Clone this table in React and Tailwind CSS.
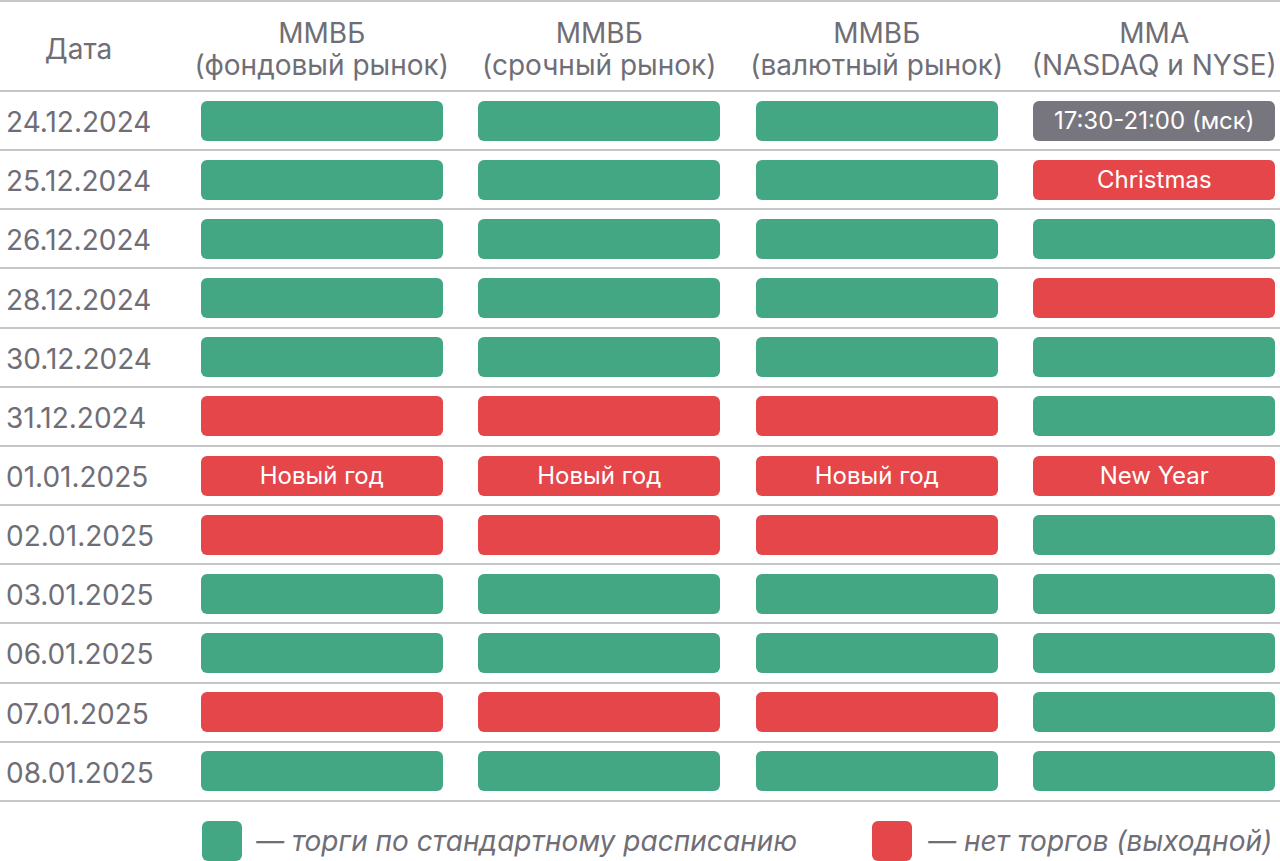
import React from "react";

const G = "g", R = "r";
const rows = [
  ["24.12.2024", [G, G, G, { c: "gray", t: "17:30-21:00 (мск)" }]],
  ["25.12.2024", [G, G, G, { c: R, t: "Christmas" }]],
  ["26.12.2024", [G, G, G, G]],
  ["28.12.2024", [G, G, G, R]],
  ["30.12.2024", [G, G, G, G]],
  ["31.12.2024", [R, R, R, G]],
  ["01.01.2025", [{ c: R, t: "Новый год" }, { c: R, t: "Новый год" }, { c: R, t: "Новый год" }, { c: R, t: "New Year" }]],
  ["02.01.2025", [R, R, R, G]],
  ["03.01.2025", [G, G, G, G]],
  ["06.01.2025", [G, G, G, G]],
  ["07.01.2025", [R, R, R, G]],
  ["08.01.2025", [G, G, G, G]],
];

const headers = [
  ["ММВБ", "(фондовый рынок)"],
  ["ММВБ", "(срочный рынок)"],
  ["ММВБ", "(валютный рынок)"],
  ["ММА", "(NASDAQ и NYSE)"],
];

function Bar({ v }) {
  const c = typeof v === "string" ? v : v.c;
  const t = typeof v === "string" ? null : v.t;
  const bg = c === "g" ? "bg-[#44a783]" : c === "r" ? "bg-[#e5464a]" : "bg-[#77767f]";
  return (
    <div className={`h-[40px] w-[242px] rounded-[6px] ${bg} flex items-center justify-center text-white text-[24px] leading-none`}>
      {t}
    </div>
  );
}

export default function App() {
  return (
    <div className="w-[1280px] h-[861px] overflow-hidden bg-white" style={{ fontFamily: "Inter, 'Noto Sans', sans-serif" }}>
      <div className="w-[1293px] text-[#6f6e76]">
        <div className="flex h-[92px] border-y-2 border-[#c6c6ca]">
          <div className="w-[183px] pr-[26px] pt-[6px] flex items-center justify-center text-[28px]">Дата</div>
          {headers.map((h, i) => (
            <div key={i} className="w-[277.5px] pt-[6px] flex flex-col items-center justify-center text-[28px] leading-[32px]">
              <div>{h[0]}</div>
              <div>{h[1]}</div>
            </div>
          ))}
        </div>
        {rows.map(([d, cells]) => (
          <div key={d} className="flex h-[59.17px] border-b-2 border-[#c6c6ca]">
            <div className="w-[183px] pl-[6px] flex items-center text-[28px] whitespace-nowrap pt-[3px]">{d}</div>
            {cells.map((v, i) => (
              <div key={i} className="w-[277.5px] flex items-center justify-center">
                <Bar v={v} />
              </div>
            ))}
          </div>
        ))}
        <div className="flex items-start pt-[18px] text-[28px] italic">
          <div className="ml-[202px] w-[670px] flex items-center gap-[14px]">
            <div className="w-[40px] h-[40px] rounded-[6px] bg-[#44a783]" />
            <span>— торги по стандартному расписанию</span>
          </div>
          <div className="flex items-center gap-[16px]">
            <div className="w-[40px] h-[40px] rounded-[6px] bg-[#e5464a]" />
            <span>— нет торгов (выходной)</span>
          </div>
        </div>
      </div>
    </div>
  );
}
